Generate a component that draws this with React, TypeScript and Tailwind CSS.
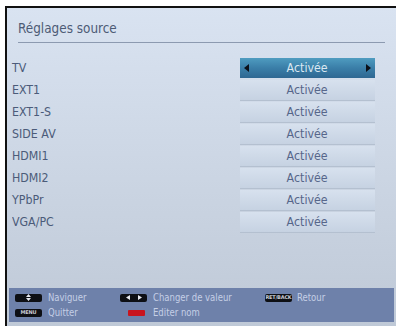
import React from 'react';

const sources = ['TV', 'EXT1', 'EXT1-S', 'SIDE AV', 'HDMI1', 'HDMI2', 'YPbPr', 'VGA/PC'];

const font = { fontFamily: '"DejaVu Sans", sans-serif' };

const KeyCap: React.FC<{ children?: React.ReactNode }> = ({ children }) => (
  <span className="flex h-[8px] w-[27px] items-center justify-center rounded-[2px] bg-[#0d0f14] text-[5px] font-bold leading-none tracking-[-0.2px] text-[#c9ccd4]">
    {children}
  </span>
);

export default function App() {
  return (
    <div className="h-[326px] w-[401px] overflow-hidden bg-white pl-[5px] pt-[6px]" style={font}>
      <div className="flex h-[320px] w-[391px] flex-col border-l-2 border-t-2 border-[#111] bg-gradient-to-b from-[#d9e3f1] to-[#bfc9d7]">
        <div className="mx-[11px] mt-[11px] border-b border-[#8c9ab0] pb-[5px] text-[14px] leading-[18px] text-[#4d5b75]">
          <span className="inline-block origin-left scale-x-[0.86]">Réglages source</span>
        </div>

        <div className="mt-[15px] flex flex-col gap-[2px]">
          {sources.map((s, i) => (
            <div key={s} className="flex h-[20px] items-center">
              <span className="w-[233px] pl-[5px] text-[13px] text-[#4b5b79]">
                <span className="inline-block origin-left scale-x-[0.85]">{s}</span>
              </span>
              {i === 0 ? (
                <div className="relative flex h-[20px] w-[135px] items-center justify-center bg-gradient-to-b from-[#4f9cc0] via-[#3a7ea8] to-[#2e6792] text-[13px] text-[#dbe8f2]">
                  <span className="absolute left-[4px] h-0 w-0 border-y-[4px] border-r-[5px] border-y-transparent border-r-[#0b0f18]" />
                  <span className="inline-block scale-x-[0.85]">Activée</span>
                  <span className="absolute right-[4px] h-0 w-0 border-y-[4px] border-l-[5px] border-y-transparent border-l-[#0b0f18]" />
                </div>
              ) : (
                <div className="flex h-[20px] w-[135px] items-center justify-center bg-gradient-to-b from-[#d7e1ee] to-[#c6d2e2] text-[13px] text-[#56668a] shadow-[0_1px_0_#b4c0d0]">
                  <span className="inline-block scale-x-[0.85]">Activée</span>
                </div>
              )}
            </div>
          ))}
        </div>

        <div className="flex-1" />

        <div className="mb-[4px] ml-[2px] mr-[2px] flex h-[34px] flex-col justify-center gap-[3px] bg-[#6e81aa] text-[10px] leading-[12px] text-[#c5cfe6]">
          <div className="flex items-center">
            <div className="flex w-[111px] items-center gap-[6px] pl-[6px]">
              <KeyCap>
                <svg width="5" height="7" viewBox="0 0 5 7"><path d="M2.5 0L5 3H0z M0 4h5L2.5 7z" fill="#e8eaf0" /></svg>
              </KeyCap>
              <span className="inline-block origin-left scale-x-[0.85]">Naviguer</span>
            </div>
            <div className="flex w-[145px] items-center gap-[6px]">
              <KeyCap>
                <svg width="16" height="5" viewBox="0 0 16 5"><path d="M0 2.5L4 0v5z M16 2.5L12 0v5z" fill="#e8eaf0" /></svg>
              </KeyCap>
              <span className="inline-block origin-left scale-x-[0.85] whitespace-nowrap">Changer de valeur</span>
            </div>
            <div className="flex items-center gap-[5px]">
              <KeyCap>RET/BACK</KeyCap>
              <span className="inline-block origin-left scale-x-[0.85]">Retour</span>
            </div>
          </div>
          <div className="flex items-center">
            <div className="flex w-[111px] items-center gap-[6px] pl-[6px]">
              <KeyCap>MENU</KeyCap>
              <span className="inline-block origin-left scale-x-[0.85]">Quitter</span>
            </div>
            <div className="flex items-center gap-[8px] pl-[8px]">
              <span className="h-[6px] w-[17px] rounded-[1px] bg-[#c8141e]" />
              <span className="inline-block origin-left scale-x-[0.85]">Editer nom</span>
            </div>
          </div>
        </div>
      </div>
    </div>
  );
}
